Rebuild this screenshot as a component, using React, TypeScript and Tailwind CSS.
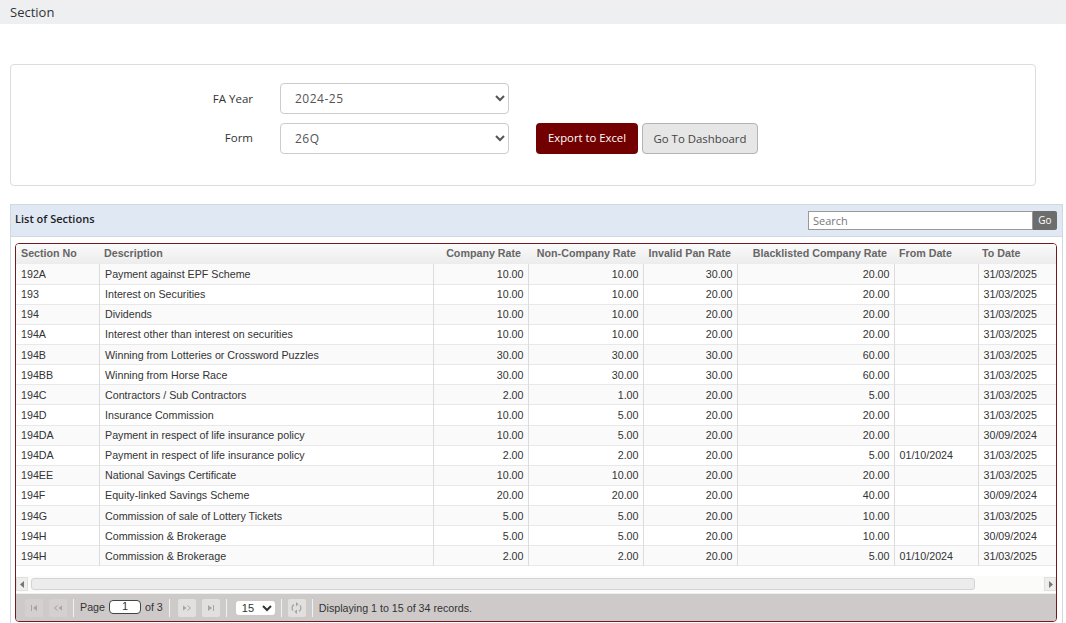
const rows: string[][] = [
  ["192A","Payment against EPF Scheme","10.00","10.00","30.00","20.00","","31/03/2025"],
  ["193","Interest on Securities","10.00","10.00","20.00","20.00","","31/03/2025"],
  ["194","Dividends","10.00","10.00","20.00","20.00","","31/03/2025"],
  ["194A","Interest other than interest on securities","10.00","10.00","20.00","20.00","","31/03/2025"],
  ["194B","Winning from Lotteries or Crossword Puzzles","30.00","30.00","30.00","60.00","","31/03/2025"],
  ["194BB","Winning from Horse Race","30.00","30.00","30.00","60.00","","31/03/2025"],
  ["194C","Contractors / Sub Contractors","2.00","1.00","20.00","5.00","","31/03/2025"],
  ["194D","Insurance Commission","10.00","5.00","20.00","20.00","","31/03/2025"],
  ["194DA","Payment in respect of life insurance policy","10.00","5.00","20.00","20.00","","30/09/2024"],
  ["194DA","Payment in respect of life insurance policy","2.00","2.00","20.00","5.00","01/10/2024","31/03/2025"],
  ["194EE","National Savings Certificate","10.00","10.00","20.00","20.00","","31/03/2025"],
  ["194F","Equity-linked Savings Scheme","20.00","20.00","20.00","40.00","","30/09/2024"],
  ["194G","Commission of sale of Lottery Tickets","5.00","5.00","20.00","10.00","","31/03/2025"],
  ["194H","Commission & Brokerage","5.00","5.00","20.00","10.00","","30/09/2024"],
  ["194H","Commission & Brokerage","2.00","2.00","20.00","5.00","01/10/2024","31/03/2025"],
];

function PagerButton({ children, faint }: { children: React.ReactNode; faint?: boolean }) {
  return (
    <span className={`flex h-[18px] w-[18px] items-center justify-center rounded-[2px] ${faint ? "bg-[#d4d0d0]" : "bg-[#e2dfdf]"}`}>{children}</span>
  );
}

function Sep() {
  return <span className="mx-[6px] h-[18px] w-px bg-[#f2f0f0]" />;
}

function Glyph({ d, chevron }: { d: string; chevron?: string }) {
  return (
    <svg width="10" height="8" viewBox="0 0 10 8" fill="#a8a4a4">
      <path d={d} />
      {chevron && <path d={chevron} fill="none" stroke="#a8a4a4" strokeWidth="1" />}
    </svg>
  );
}

export default function App() {
  return (
    <div className="h-[623px] w-[1066px] overflow-hidden bg-white font-['Open_Sans',sans-serif]">
      <div className="h-[24px] border-t border-[#f3ecec] bg-[#eeeff1] pl-[10px] text-[13px] leading-[22px] text-[#333]">Section</div>

      <div className="ml-[10px] mt-[40px] flex h-[122px] w-[1026px] items-start rounded-[4px] border border-[#dcdcdc] pt-[18px]">
        <div className="flex flex-col gap-[9.5px]">
          <div className="flex items-center">
            <label className="w-[242px] text-right text-[11.5px] text-[#333]">FA Year</label>
            <select defaultValue="2024-25" className="ml-[27px] h-[30.5px] w-[229px] rounded-[4px] border border-[#cccccc] bg-white pl-[10px] text-[12px] tracking-[0.5px] text-[#555]">
              <option>2024-25</option>
            </select>
          </div>
          <div className="flex items-center">
            <label className="-mt-[2px] w-[242px] text-right text-[11.5px] text-[#333]">Form</label>
            <select defaultValue="26Q" className="ml-[27px] h-[30.5px] w-[229px] rounded-[4px] border border-[#cccccc] bg-white pl-[10px] text-[12px] tracking-[0.5px] text-[#555]">
              <option>26Q</option>
            </select>
            <button className="ml-[27px] h-[31px] w-[102px] rounded-[4px] bg-[#720000] text-[11.3px] text-white">Export to Excel</button>
            <button className="ml-[4px] h-[31px] w-[116px] rounded-[4px] border border-[#b4b4b4] bg-[#e6e6e6] text-[11.4px] text-[#444]">Go To Dashboard</button>
          </div>
        </div>
      </div>

      <div className="ml-[10px] mt-[18px] h-[421px] w-[1053px] border border-b-0 border-[#d0d8e0] bg-white">
        <div className="flex h-[32px] items-center justify-between border-b border-[#d0d8e0] bg-[#e0e8f4] pl-[4px] pr-[5px]">
          <span className="-mt-[2px] text-[11px] font-semibold text-[#222]">List of Sections</span>
          <div className="flex h-[19px]">
            <input placeholder="Search" className="h-[19px] w-[225px] border border-[#999] bg-white pl-[4px] text-[11px] placeholder:text-[#777]" />
            <span className="flex h-[19px] w-[24px] items-center justify-center rounded-r-[2px] bg-[#6d6d6d] text-[10px] text-white">Go</span>
          </div>
        </div>

        <div className="ml-[4px] mt-[6px] flex h-[379px] w-[1042px] flex-col overflow-hidden rounded-[4px] border border-[#6f1c1c] font-['Liberation_Sans',sans-serif]">
          <table className="w-[1040px] table-fixed border-collapse text-[10.7px] text-[#333]">
            <colgroup>
              <col className="w-[83px]" />
              <col className="w-[334px]" />
              <col className="w-[95px]" />
              <col className="w-[115px]" />
              <col className="w-[94px]" />
              <col className="w-[157px]" />
              <col className="w-[84px]" />
              <col className="w-[78px]" />
            </colgroup>
            <thead>
              <tr className="h-[20px] bg-gradient-to-b from-[#fafafa] to-[#ececec] text-[10.7px] font-bold text-[#666]">
                <th className="pb-[2px] pl-[5px] text-left font-bold">Section No</th>
                <th className="pb-[2px] pl-[5px] text-left font-bold">Description</th>
                <th className="pb-[2px] pr-[7px] text-right font-bold">Company Rate</th>
                <th className="pb-[2px] pr-[7px] text-right font-bold">Non-Company Rate</th>
                <th className="pb-[2px] pr-[6px] text-right font-bold">Invalid Pan Rate</th>
                <th className="pb-[2px] pr-[7px] text-right font-bold">Blacklisted Company Rate</th>
                <th className="pb-[2px] pl-[5px] text-left font-bold">From Date</th>
                <th className="pb-[2px] pl-[4px] text-left font-bold">To Date</th>
              </tr>
            </thead>
            <tbody>
              {rows.map((r, i) => (
                <tr key={i} className={`h-[20.14px] border-b border-[#e8e8e8] ${i % 2 ? "bg-white" : "bg-[#fafafa]"}`}>
                  <td className="border-r border-[#dcdcdc] pl-[5px]">{r[0]}</td>
                  <td className="border-r border-[#dcdcdc] pl-[5.5px]">{r[1]}</td>
                  <td className="border-r border-[#dcdcdc] pr-[4px] text-right">{r[2]}</td>
                  <td className="border-r border-[#dcdcdc] pr-[4px] text-right">{r[3]}</td>
                  <td className="border-r border-[#dcdcdc] pr-[4px] text-right">{r[4]}</td>
                  <td className="border-r border-[#dcdcdc] pr-[4px] text-right">{r[5]}</td>
                  <td className="border-r border-[#dcdcdc] pl-[5px]">{r[6]}</td>
                  <td className="pl-[5px]">{r[7]}</td>
                </tr>
              ))}
            </tbody>
          </table>

          <div className="mt-[10px] flex h-[16px] items-center bg-[#fbfbf9]">
            <span className="flex h-[14px] w-[12px] items-center justify-center border border-[#e0e0e0] bg-[#eee]">
              <svg width="5" height="7" viewBox="0 0 5 7" fill="#777"><path d="M4 0v7L0 3.5z" /></svg>
            </span>
            <span className="ml-[3px] h-[12px] w-[944px] rounded-[3px] border border-[#d4d4d4] bg-[#ececec]" />
            <span className="ml-auto flex h-[14px] w-[12px] items-center justify-center border border-[#e0e0e0] bg-[#eee]">
              <svg width="5" height="7" viewBox="0 0 5 7" fill="#777"><path d="M1 0v7l4-3.5z" /></svg>
            </span>
          </div>

          <div className="mt-px flex h-[25px] flex-1 items-center border-t border-[#eee] bg-[#cfcaca] pl-[9px] text-[10.7px] text-[#333]">
            <PagerButton faint><Glyph d="M2 1h1v6H2zM8 1v6L4 4z" /></PagerButton>
            <span className="ml-[6px]"><PagerButton faint><Glyph d="M9 1.5v5L5.5 4z" chevron="M4.5 1.5L1.5 4l3 2.5" /></PagerButton></span>
            <Sep />
            <span className="-mt-[2px]">Page</span>
            <span className="-mt-[2px] ml-[4px] flex h-[14px] w-[32px] items-center justify-center rounded-[4px] border border-[#444] bg-white text-[11px]">1</span>
            <span className="-mt-[2px] ml-[4px]">of 3</span>
            <Sep />
            <span className="ml-[2px]"><PagerButton><Glyph d="M1 1.5v5L4.5 4z" chevron="M5.5 1.5L8.5 4l-3 2.5" /></PagerButton></span>
            <span className="ml-[6px]"><PagerButton><Glyph d="M2 1v6l4-3zM7 1h1v6H7z" /></PagerButton></span>
            <Sep />
            <select defaultValue="15" className="ml-[3px] h-[14px] w-[39px] rounded-[3px] bg-white pl-[2px] text-[11px] text-[#333]">
              <option>15</option>
            </select>
            <Sep />
            <PagerButton>
              <svg width="11" height="12" viewBox="0 0 11 12" fill="none" stroke="#a8a4a4" strokeWidth="1.3">
                <path d="M3 2.6a4 4 0 0 0-1 6M8 9.4a4 4 0 0 0 1-6" />
                <path d="M5 0v4.4L7.6 2.2zM6 12V7.6L3.4 9.8z" fill="#a8a4a4" stroke="none" />
              </svg>
            </PagerButton>
            <Sep />
            <span>Displaying 1 to 15 of 34 records.</span>
          </div>
        </div>
      </div>
    </div>
  );
}
